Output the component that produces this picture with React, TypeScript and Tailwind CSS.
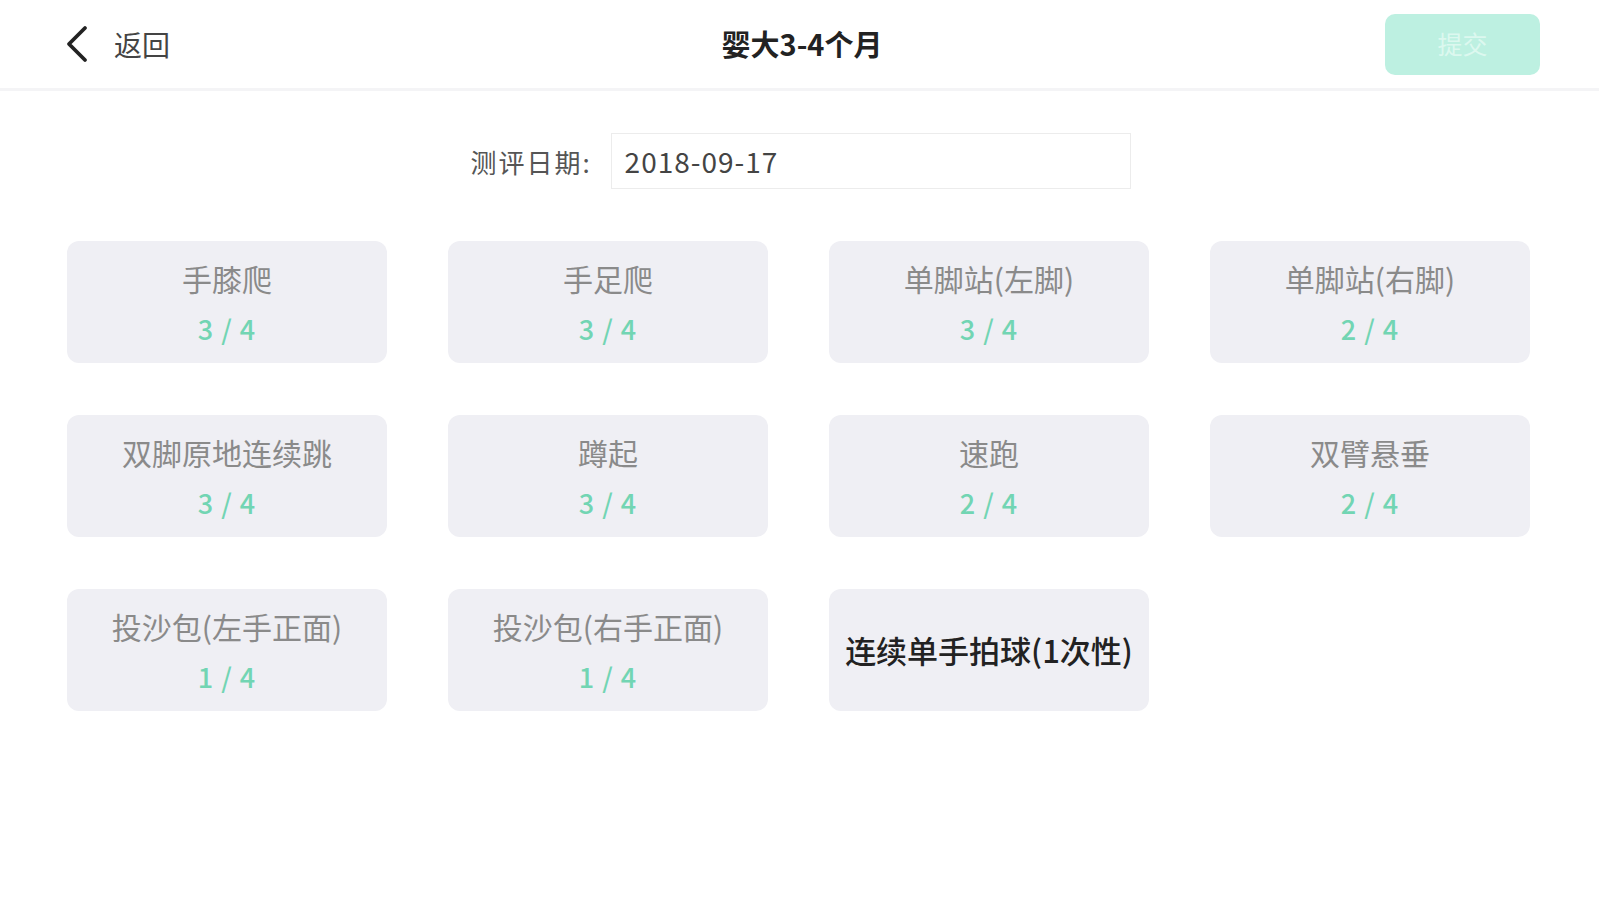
import React from 'react'

type Item = {
  name: string
  score?: string
}

const items: Item[] = [
  { name: '手膝爬', score: '3 / 4' },
  { name: '手足爬', score: '3 / 4' },
  { name: '单脚站(左脚)', score: '3 / 4' },
  { name: '单脚站(右脚)', score: '2 / 4' },
  { name: '双脚原地连续跳', score: '3 / 4' },
  { name: '蹲起', score: '3 / 4' },
  { name: '速跑', score: '2 / 4' },
  { name: '双臂悬垂', score: '2 / 4' },
  { name: '投沙包(左手正面)', score: '1 / 4' },
  { name: '投沙包(右手正面)', score: '1 / 4' },
  { name: '连续单手拍球(1次性)' },
]

const font = "font-['Noto_Sans_CJK_SC','Noto_Sans',sans-serif]"

const App: React.FC = () => {
  return (
    <div className={`h-[900px] w-full bg-white ${font}`}>
      {/* header */}
      <div className="flex h-[91px] items-center border-b-[3px] border-[#f4f4f6] pl-[64px] pr-[59px]">
        <div className="flex w-[300px] items-center gap-[24px]">
          <svg width="26" height="38" viewBox="0 0 26 38" fill="none">
            <path d="M21 3 L5 19 L21 35" stroke="#222" strokeWidth="3.8" strokeLinecap="round" strokeLinejoin="round" />
          </svg>
          <span className="text-[28px] text-[#444]">返回</span>
        </div>
        <div className="flex-1 text-center text-[29px] font-bold text-[#222]">婴大3-4个月</div>
        <div className="flex w-[300px] justify-end">
          <button className="h-[61px] w-[155px] rounded-[10px] bg-[#bdf0e1] text-[25px] text-[#dcf8ef]">
            提交
          </button>
        </div>
      </div>

      {/* date */}
      <div className="mt-[42px] flex items-center justify-center pl-[2px]">
        <span className="mr-[19px] text-[26px] tracking-[2px] text-[#555]">测评日期:</span>
        <div className="flex h-[56px] w-[520px] items-center border border-[#ececec] px-[13px] text-[28px] tracking-[1px] text-[#444]">
          2018-09-17
        </div>
      </div>

      {/* grid */}
      <div className="mt-[52px] grid w-fit grid-cols-[repeat(4,320px)] gap-x-[61px] gap-y-[52px] pl-[67px]">
        {items.map((it) => (
          <div
            key={it.name}
            className="flex h-[122px] flex-col items-center justify-center rounded-[12px] bg-[#efeff4]"
          >
            {it.score ? (
              <>
                <span className="text-[30px] leading-[40px] text-[#8a8a8a]">{it.name}</span>
                <span className="mt-[14px] text-[27px] leading-[34px] font-medium tracking-[1px] text-[#72d5b3]">{it.score}</span>
              </>
            ) : (
              <span className="text-[31px] font-medium text-[#222]">{it.name}</span>
            )}
          </div>
        ))}
      </div>
    </div>
  )
}

export default App
